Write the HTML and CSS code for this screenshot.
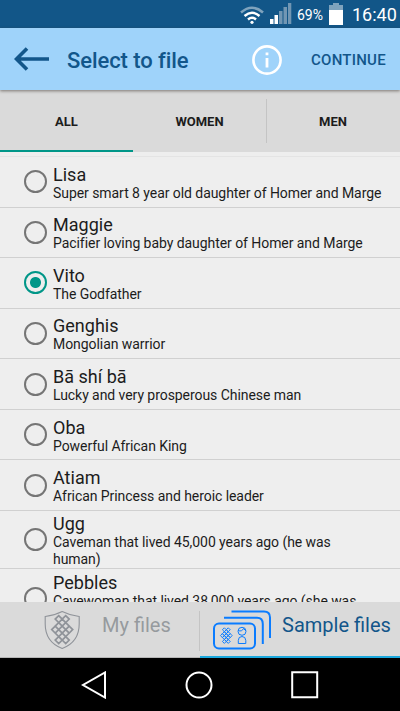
FILE: index.html
```html
<!DOCTYPE html>
<html lang="en">
<head>
<meta charset="utf-8">
<title>Select to file</title>
<link rel="stylesheet" href="styles.css">
</head>
<body>
<div class="screen">
  <div class="status">
    <svg class="wifi" width="24" height="18" viewBox="0 0 24 18" fill="none">
      <path d="M1 6.5Q12-3 23 6.5" stroke="#7fa3bd" stroke-width="2.6"/>
      <path d="M4.5 10Q12 3.5 19.500 10M8 13.500Q12 10 16 13.500" stroke="#fff" stroke-width="2.4"/>
      <circle cx="12" cy="16.300" r="1.600" fill="#fff"/>
    </svg>
    <svg class="signal" width="22" height="21" viewBox="0 0 22 21">
      <path d="M0 16h3.500v5H0zM4.500 12H8v9H4.500z" fill="#fff"/>
      <path d="M9 8h3.500v13H9zM13.500 4H17v17h-3.500zM18 0h3.300v21H18z" fill="#7196b3"/>
    </svg>
    <span class="percent">69%</span>
    <svg class="battery" width="14" height="22" viewBox="0 0 14 22">
      <path d="M4 0h6v2h4v5H0V2h4z" fill="#7fa3bd"/>
      <path d="M0 7h14v15H0z" fill="#fff"/>
    </svg>
    <span class="clock">16:40</span>
  </div>

  <header class="appbar">
    <svg class="back" width="36" height="24" viewBox="0 0 36 24" fill="none" stroke="#12568a" stroke-width="3.600"><path d="M3 12H35M13 1.500L2.500 12L13 22.500"/></svg>
    <h1 class="title">Select to file</h1>
    <svg class="info" width="30" height="30" viewBox="0 0 30 30"><circle cx="15" cy="15" r="13.600" fill="none" stroke="#fff" stroke-width="2.600"/><path d="M13.600 7.500h2.800v2.800h-2.800zM13.600 13h2.800v9.500h-2.800z" fill="#fff"/></svg>
    <span class="continue">CONTINUE</span>
  </header>

  <nav class="tabs">
    <div class="tab active">ALL</div>
    <div class="tab">WOMEN</div>
    <div class="tab ruled">MEN</div>
  </nav>

  <main class="list">
    <div class="row"><i class="radio"></i><div class="text"><div class="name">Lisa</div><div class="sub">Super smart 8 year old daughter of Homer and Marge</div></div></div>
    <div class="row"><i class="radio"></i><div class="text"><div class="name">Maggie</div><div class="sub">Pacifier loving baby daughter of Homer and Marge</div></div></div>
    <div class="row"><i class="radio on"></i><div class="text"><div class="name">Vito</div><div class="sub">The Godfather</div></div></div>
    <div class="row"><i class="radio"></i><div class="text"><div class="name">Genghis</div><div class="sub">Mongolian warrior</div></div></div>
    <div class="row"><i class="radio"></i><div class="text"><div class="name">Bā shí bā</div><div class="sub">Lucky and very prosperous Chinese man</div></div></div>
    <div class="row"><i class="radio"></i><div class="text"><div class="name">Oba</div><div class="sub">Powerful African King</div></div></div>
    <div class="row"><i class="radio"></i><div class="text"><div class="name">Atiam</div><div class="sub">African Princess and heroic leader</div></div></div>
    <div class="row tall"><i class="radio"></i><div class="text"><div class="name">Ugg</div><div class="sub">Caveman that lived 45,000 years ago (he was<br>human)</div></div></div>
    <div class="row tall"><i class="radio"></i><div class="text"><div class="name">Pebbles</div><div class="sub">Cavewoman that lived 38,000 years ago (she was</div><div class="sub">&nbsp;</div></div></div>
  </main>

  <footer class="bottom">
    <div class="choice mine">
      <svg class="shield" width="36" height="40" viewBox="0 0 36 40" fill="none" stroke="#8f9399">
        <path d="M18.200 1.500Q10.500 5.500 1.200 6.500V14Q1.200 32 18.200 38.500Q35.200 32 35.200 14V6.500Q26 5.500 18.200 1.500Z" stroke-width="1.100"/>
        <g transform="translate(18.200 19.600) scale(3.500)" stroke-width=".48">
          <path id="knot" d="M-1-4l1 1-1 1-1-1zM1-4l1 1-1 1-1-1zM-1-2l1 1-1 1-1-1zM1-2l1 1-1 1-1-1zM-2-1l1 1-1 1-1-1zM0-1l1 1-1 1-1-1zM2-1l1 1-1 1-1-1zM-1 0l1 1-1 1-1-1zM1 0l1 1-1 1-1-1zM-1 2l1 1-1 1-1-1zM1 2l1 1-1 1-1-1zM0-3l1 1-1 1-1-1zM0 1l1 1-1 1-1-1z"/>
        </g>
      </svg>
      <span class="label">My files</span>
    </div>
    <div class="choice sample">
      <svg class="cards" width="60" height="40" viewBox="0 0 60 40" fill="none" stroke="#0a7cff" stroke-width="2">
        <path d="M18.500 1.500H51Q57 1.500 57 7.500V28M11 7.800H44Q49.800 7.800 49.800 14V34"/>
        <rect x="1" y="13.500" width="41" height="25" rx="5"/>
        <use href="#knot" transform="translate(13.300 25.600) scale(1.950)" stroke-width=".5"/>
        <g stroke-width="1">
          <circle cx="29" cy="21.300" r="4"/><path d="M25 20.500Q29 22 30.500 18.500L33 21M25.300 33.500V30.500Q25.300 26.500 29 26.500T32.800 30.500V33.500Z"/>
        </g>
      </svg>
      <span class="label">Sample files</span>
    </div>
  </footer>

  <div class="sysnav">
    <svg width="26" height="28" viewBox="0 0 26 28"><path d="M24 1.500V26.500L2 14Z"/></svg>
    <svg width="28" height="28" viewBox="0 0 28 28"><circle cx="14" cy="14" r="12.500"/></svg>
    <svg width="28" height="28" viewBox="0 0 28 28"><path d="M1.200 1.200H26.200V26.200H1.200Z"/></svg>
  </div>
</div>
</body>
</html>
```
FILE: styles.css
```css
* { box-sizing: border-box; }
body { margin: 0; font-family: Roboto, sans-serif; color: #1c1c1c; }
.screen { width: 400px; height: 711px; display: flex; flex-direction: column; overflow: hidden; background: #eee; white-space: nowrap; }

.status { flex: none; height: 28px; background: #125688; color: #fff; display: flex; align-items: flex-start; padding-left: 240px; }
.wifi { margin-top: 6px; }
.signal { margin: 3px 0 0 6px; }
.percent { width: 31px; margin-left: 5px; font-size: 14px; line-height: 30px; }
.battery { margin-top: 3px; margin-left: 1px; }
.clock { margin-left: 9px; font-size: 18px; line-height: 29px; }

.appbar { flex: none; height: 62px; background: #9fd3fa; color: #12568a; display: flex; align-items: center; padding-left: 14px; position: relative; box-shadow: 0 1px 3px rgba(60, 50, 40, .6); z-index: 1; }
.title { margin: 3px 0 0 17px; width: 184px; font-size: 22px; font-weight: 500; letter-spacing: -.08px; }
.info { margin: 1px 0 0 1px; }
.continue { margin: 2px 0 0 29px; font-size: 15px; font-weight: 500; letter-spacing: .25px; }

.tabs { flex: none; height: 62px; display: grid; grid-template-columns: 133px 133px 134px; background: #dadada; align-items: center; }
.tab { text-align: center; font-size: 13px; font-weight: 700; height: 62px; line-height: 63px; }
.active { border-bottom: 2px solid #009688; }
.ruled { background: linear-gradient(#c4c4c4, #c4c4c4) 0 9px / 1px 44px no-repeat; }

.list { flex: none; height: 450px; padding-top: 5px; overflow: hidden; background: linear-gradient(#e4e4e4, #e4e4e4) 0 4px / 100% 1px no-repeat; }
.row { height: 50.570px; padding-left: 24px; display: flex; align-items: center; border-bottom: 1px solid #d0d0d0; }
.row.tall { height: 58.400px; }
.radio { flex: none; width: 23px; height: 23px; margin-right: 6px; border: 2px solid #757575; border-radius: 50%; }
.on { border-color: #009688; background: radial-gradient(circle, #009688 5px, transparent 6px); }
.text { padding-top: 2.500px; }
.tall .text { padding-top: 2px; }
.name { font-size: 18px; line-height: 20px; letter-spacing: .02px; }
.sub { font-size: 14px; line-height: 16.500px; letter-spacing: -.06px; }

.bottom { flex: none; height: 56px; background: #dadada; display: grid; grid-template-columns: 200px 200px; }
.choice { display: flex; align-items: flex-start; font-size: 20px; border-bottom: 1px solid #b5b5b5; }
.mine { padding-left: 44px; color: #969a9e; background: linear-gradient(#c4c4c4, #c4c4c4) 199px 9px / 1px 40px no-repeat; }
.sample { padding-left: 13px; color: #12568a; border-bottom: 2px solid #1ba8dd; }
.shield { margin-top: 8px; }
.cards { margin-top: 8px; }
.label { line-height: 47px; }
.mine .label { margin-left: 22px; }
.sample .label { margin-left: 9px; }

.sysnav { flex: 1; background: #000; display: flex; align-items: center; gap: 78px; padding-left: 81px; fill: none; stroke: #fff; stroke-width: 2; }
```
